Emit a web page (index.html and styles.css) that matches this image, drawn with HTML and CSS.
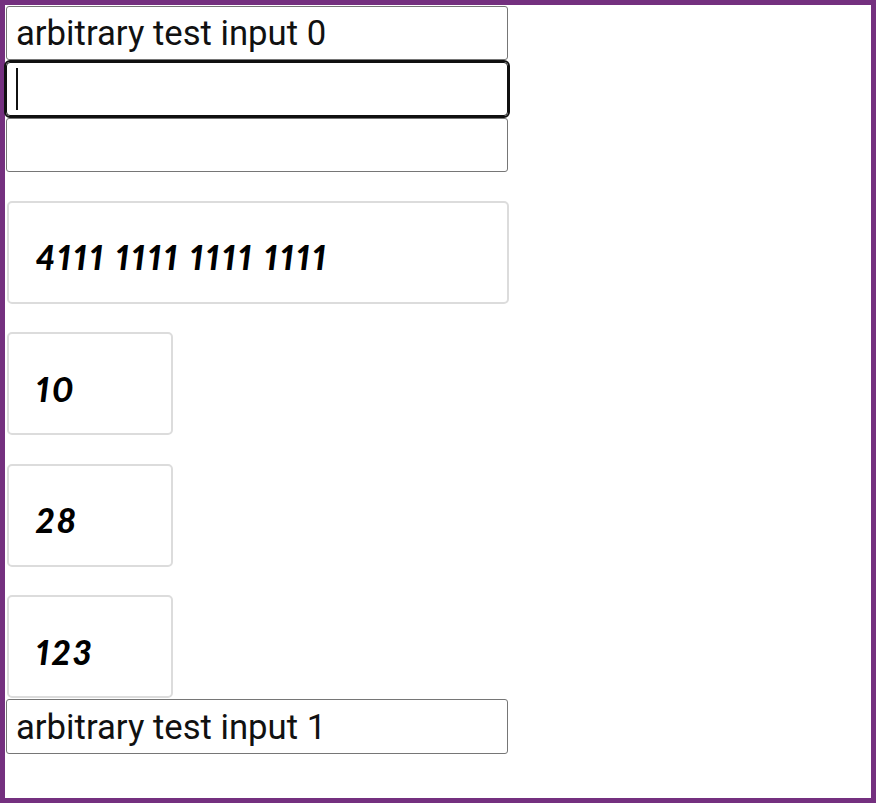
FILE: index.html
```html
<!DOCTYPE html>
<html lang="en">
<head>
<meta charset="utf-8">
<title>Form</title>
<link rel="stylesheet" href="styles.css">
</head>
<body>
<div class="frame">
  <input class="field" type="text" value="arbitrary test input 0">
  <div class="focus-wrap">
    <input class="field field--focus" type="text" value="">
    <span class="caret"></span>
  </div>
  <input class="field" type="text" value="">
  <div class="card card--wide">4111 1111 1111 1111</div>
  <div class="card card--small">10</div>
  <div class="card card--small">28</div>
  <div class="card card--small">123</div>
  <input class="field field--last" type="text" value="arbitrary test input 1">
</div>
</body>
</html>
```
FILE: styles.css
```css
html, body {
  margin: 0;
  padding: 0;
  background: #ffffff;
}

.frame {
  box-sizing: border-box;
  width: 876px;
  height: 803px;
  border: 5px solid #74307f;
  padding: 1px 0 0 1px;
  display: flex;
  flex-direction: column;
  align-items: flex-start;
}

.field {
  display: block;
  box-sizing: border-box;
  width: 502px;
  height: 54px;
  margin: 0 0 2px 0;
  padding: 0 9px;
  border: 1px solid #767676;
  border-radius: 3px;
  background: #ffffff;
  color: #111111;
  font-family: Roboto, "Liberation Sans", sans-serif;
  font-size: 34.7px;
  outline: none;
}

.focus-wrap {
  position: relative;
}

.field--focus {
  border: 1px solid #101010;
  outline: 2px solid #101010;
  outline-offset: 0;
  border-radius: 4px;
}

.caret {
  position: absolute;
  left: 10px;
  top: 6px;
  width: 2px;
  height: 42px;
  background: #111111;
}

.card {
  box-sizing: border-box;
  height: 103px;
  margin-top: 28.5px;
  margin-left: 1px;
  padding: 9px 0 0 27px;
  border: 2px solid #dcdcdc;
  border-radius: 5px;
  display: flex;
  align-items: center;
  font-family: Lato, "Open Sans", sans-serif;
  font-weight: 900;
  font-style: italic;
  font-size: 34px;
  letter-spacing: 2.7px;
  font-variant-numeric: proportional-nums;
  color: #000000;
}

.card--wide {
  width: 502px;
  margin-top: 26.5px;
}

.card--small {
  width: 166px;
}

.field--last {
  margin-top: 1.3px;
  height: 54.7px;
}
```
